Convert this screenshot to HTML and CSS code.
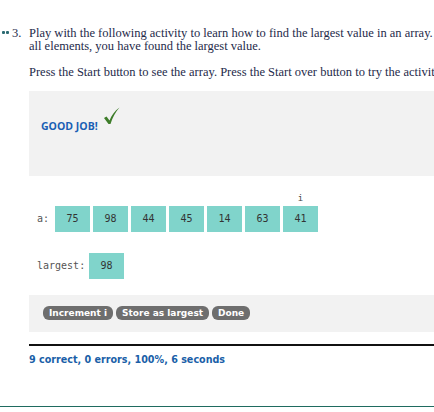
FILE: index.html
```html
<!DOCTYPE html>
<html>
<head>
<meta charset="utf-8">
<link rel="stylesheet" href="styles.css">
</head>
<body>
<div class="page">
  <div class="question">
    <div class="marker"><span class="dot"></span><span class="dot"></span><span class="num">3.</span></div>
    <div class="content">
      <p class="prose">Play with the following activity to learn how to find the largest value in an array. After looking at all elements, you have found the largest value.</p>
      <p class="prose nowrap">Press the Start button to see the array. Press the Start over button to try the activity again.</p>
      <div class="feedback">
        <span class="goodjob">GOOD JOB!</span>
        <svg class="check" width="17" height="18" viewBox="0 0 17 18"><path d="M1 11 L3.5 9.5 L6.5 13.5 C8.5 8.5 11.5 4 16.5 0.5 C12.5 5 9.5 10.5 7.5 17 L5.5 17 Z" fill="#3e7d2a"/></svg>
      </div>
      <div class="arrays">
        <div class="row">
          <span class="label">a:</span>
          <div class="cells">
            <div class="cellwrap"><span class="idx"></span><span class="cell">75</span></div>
            <div class="cellwrap"><span class="idx"></span><span class="cell">98</span></div>
            <div class="cellwrap"><span class="idx"></span><span class="cell">44</span></div>
            <div class="cellwrap"><span class="idx"></span><span class="cell">45</span></div>
            <div class="cellwrap"><span class="idx"></span><span class="cell">14</span></div>
            <div class="cellwrap"><span class="idx"></span><span class="cell">63</span></div>
            <div class="cellwrap"><span class="idx">i</span><span class="cell">41</span></div>
          </div>
        </div>
        <div class="row row-largest">
          <span class="label label-largest">largest:</span>
          <span class="cell">98</span>
        </div>
      </div>
      <div class="controls">
        <button class="btn">Increment i</button>
        <button class="btn">Store as largest</button>
        <button class="btn">Done</button>
      </div>
      <div class="status">9 correct, 0 errors, 100%, 6 seconds</div>
    </div>
  </div>
  <div class="bottomline"></div>
</div>
</body>
</html>
```
FILE: styles.css
```css
html, body {
  margin: 0;
  padding: 0;
  background: #fff;
  overflow: hidden;
}
.page {
  width: 434px;
  height: 412px;
  position: relative;
  overflow: hidden;
}
.question {
  display: flex;
  padding-top: 27px;
}
.marker {
  width: 29px;
  flex: none;
  display: flex;
  align-items: baseline;
  padding-left: 2px;
  box-sizing: border-box;
  font-family: "Liberation Serif", serif;
  font-size: 12.5px;
  line-height: 13px;
  color: #1e2a4a;
  white-space: nowrap;
}
.dot {
  display: inline-block;
  width: 3px;
  height: 3px;
  border-radius: 1px;
  background: #2b6a72;
  margin-right: 1px;
  position: relative;
  top: -3px;
}
.num {
  margin-left: 2px;
}
.content {
  width: 520px;
  flex: none;
}
.prose {
  margin: 0 0 13px 0;
  font-family: "Liberation Serif", serif;
  font-size: 12.5px;
  line-height: 13px;
  color: #1e2a4a;
  width: 500px;
}
.nowrap {
  white-space: nowrap;
  width: auto;
}
.feedback {
  background: #f2f2f2;
  height: 85px;
  margin-top: -1px;
  padding: 0 0 0 12px;
  box-sizing: border-box;
  display: flex;
  align-items: flex-start;
}
.goodjob {
  font-family: "Open Sans", sans-serif;
  font-weight: 700;
  font-size: 10.5px;
  color: #1a5fb4;
  line-height: 14px;
  margin-top: 28px;
}
.check {
  margin-left: 5px;
  margin-top: 16px;
}
.arrays {
  padding: 16px 0 0 8px;
  height: 119px;
  box-sizing: border-box;
}
.row {
  display: flex;
  align-items: flex-end;
}
.label {
  font-family: "DejaVu Sans Mono", monospace;
  font-size: 10px;
  color: #555;
  width: 18px;
  line-height: 26px;
}
.cells {
  display: flex;
  gap: 3px;
}
.cellwrap {
  display: flex;
  flex-direction: column;
  align-items: center;
}
.idx {
  font-family: "DejaVu Sans Mono", monospace;
  font-size: 9px;
  color: #444;
  height: 14px;
  line-height: 12px;
}
.cell {
  display: block;
  width: 35px;
  height: 26px;
  background: #80d4cb;
  font-family: "DejaVu Sans Mono", monospace;
  font-size: 10px;
  line-height: 26px;
  text-align: center;
  color: #333;
}
.row-largest {
  margin-top: 21px;
}
.label-largest {
  width: 52px;
}
.controls {
  background: #f2f2f2;
  height: 37px;
  padding: 11px 0 0 14px;
  box-sizing: border-box;
  display: flex;
  gap: 3px;
  align-items: flex-start;
}
.btn {
  background: #6e6e6e;
  color: #fff;
  border: none;
  border-radius: 6px;
  font-family: "DejaVu Sans", sans-serif;
  font-weight: 700;
  font-size: 9px;
  height: 14px;
  line-height: 14px;
  padding: 0 6px;
  margin: 0;
}
.status {
  border-top: 2px solid #111;
  margin-top: 12px;
  padding-top: 8px;
  font-family: "DejaVu Sans", sans-serif;
  font-weight: 700;
  font-size: 9.6px;
  color: #1a5fa8;
}
.bottomline {
  position: absolute;
  left: 0;
  top: 406px;
  width: 434px;
  height: 1px;
  background: #1f6b60;
}
```
